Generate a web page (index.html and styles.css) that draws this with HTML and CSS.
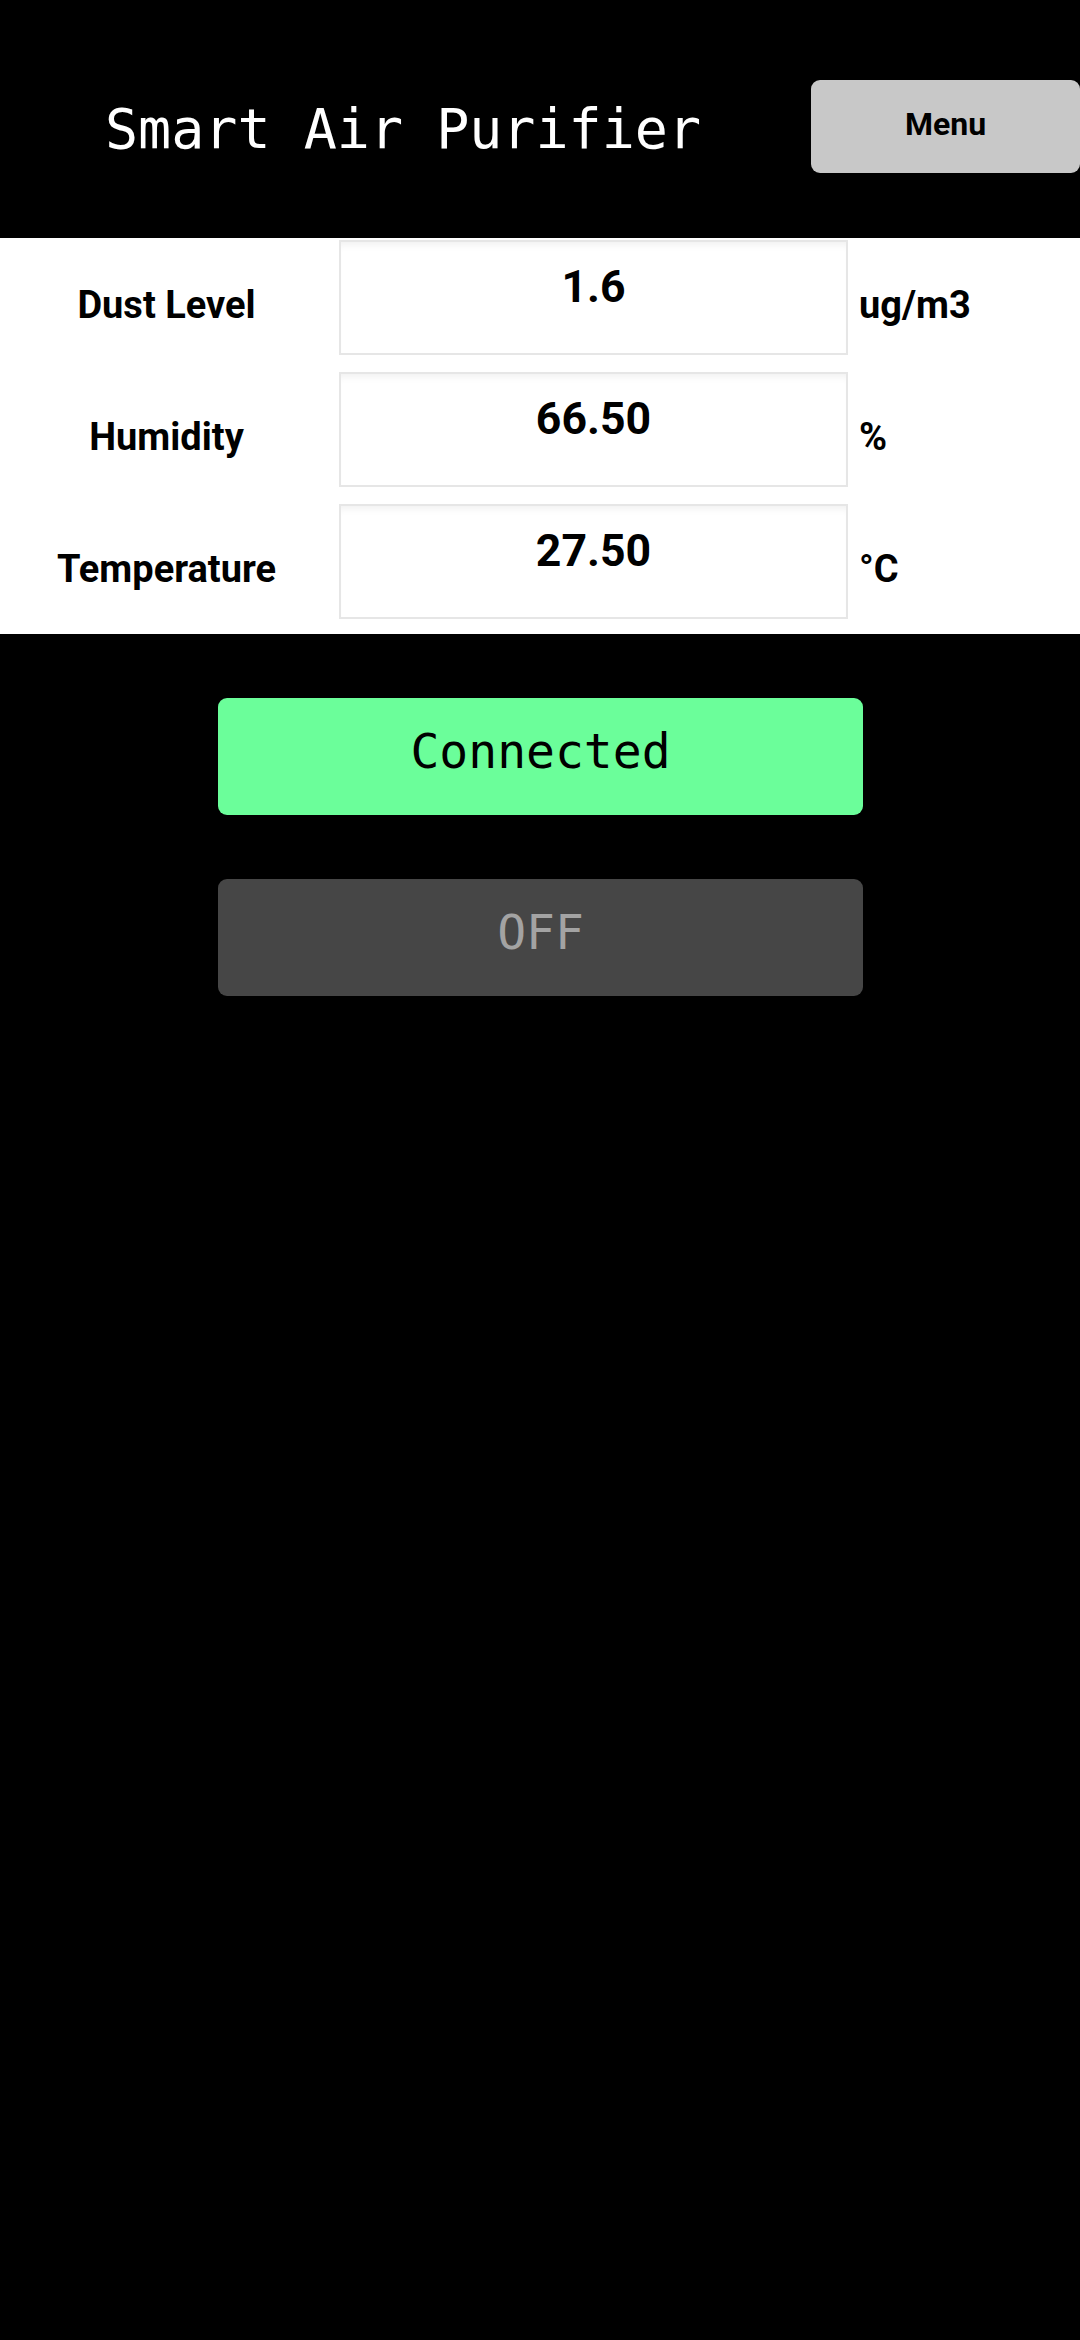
FILE: index.html
```html
<!DOCTYPE html>
<html>
<head>
<meta charset="utf-8">
<link rel="stylesheet" href="styles.css">
</head>
<body>
<header class="topbar">
  <h1 class="title">Smart Air Purifier</h1>
  <button class="menu-btn">Menu</button>
</header>
<section class="readings">
  <div class="row">
    <div class="label">Dust Level</div>
    <div class="value-cell"><div class="value-box">1.6</div></div>
    <div class="unit">ug/m3</div>
  </div>
  <div class="row">
    <div class="label">Humidity</div>
    <div class="value-cell"><div class="value-box">66.50</div></div>
    <div class="unit">%</div>
  </div>
  <div class="row">
    <div class="label">Temperature</div>
    <div class="value-cell"><div class="value-box">27.50</div></div>
    <div class="unit">°C</div>
  </div>
</section>
<section class="controls">
  <button class="ctrl-btn connected">Connected</button>
  <button class="ctrl-btn off">OFF</button>
</section>
</body>
</html>
```
FILE: styles.css
```css
html, body {
  margin: 0;
  padding: 0;
  background: #000;
}
body {
  width: 1080px;
  height: 2340px;
  overflow: hidden;
  font-family: Roboto, "Liberation Sans", sans-serif;
}
.topbar {
  height: 238px;
  display: flex;
  justify-content: space-between;
  align-items: flex-start;
  box-sizing: border-box;
}
.title {
  margin: 97px 0 0 105px;
  font-family: "DejaVu Sans Mono", "Liberation Mono", monospace;
  font-weight: normal;
  font-size: 55px;
  line-height: normal;
  color: #fff;
  white-space: nowrap;
}
.menu-btn {
  margin-top: 80px;
  width: 269px;
  height: 93px;
  border: none;
  border-radius: 9px;
  background: #c8c8c8;
  color: #000;
  font-family: Roboto, "Liberation Sans", sans-serif;
  font-weight: bold;
  font-size: 32px;
  padding: 0 0 5px 0;
}
.readings {
  background: #fff;
  display: flex;
  flex-direction: column;
}
.row {
  height: 132px;
  display: grid;
  grid-template-columns: 333px 515px 1fr;
  align-items: center;
}
.label {
  text-align: center;
  font-weight: bold;
  font-size: 38px;
  color: #000;
  padding-top: 2px;
}
.value-cell {
  align-self: start;
  padding: 2px 0 0 6px;
}
.value-box {
  box-sizing: border-box;
  width: 509px;
  height: 115px;
  border: 2px solid #e6e6e6;
  box-shadow: inset 0 8px 8px -6px rgba(0, 0, 0, 0.07);
  text-align: center;
  font-weight: bold;
  font-size: 44.6px;
  line-height: normal;
  padding-top: 19px;
  color: #000;
}
.unit {
  padding-left: 11px;
  font-weight: bold;
  font-size: 38px;
  color: #000;
  padding-top: 2px;
}
.controls {
  padding-top: 64px;
  display: flex;
  flex-direction: column;
  align-items: center;
  gap: 64px;
}
.ctrl-btn {
  width: 645px;
  height: 117px;
  margin-left: 1px;
  border: none;
  border-radius: 9px;
  font-family: "DejaVu Sans Mono", "Liberation Mono", monospace;
  font-size: 48px;
  padding: 0 0 12px 0;
}
.connected {
  background: #6bfe9a;
  color: #000;
}
.off {
  background: #464646;
  color: #a3a3a3;
}
```
